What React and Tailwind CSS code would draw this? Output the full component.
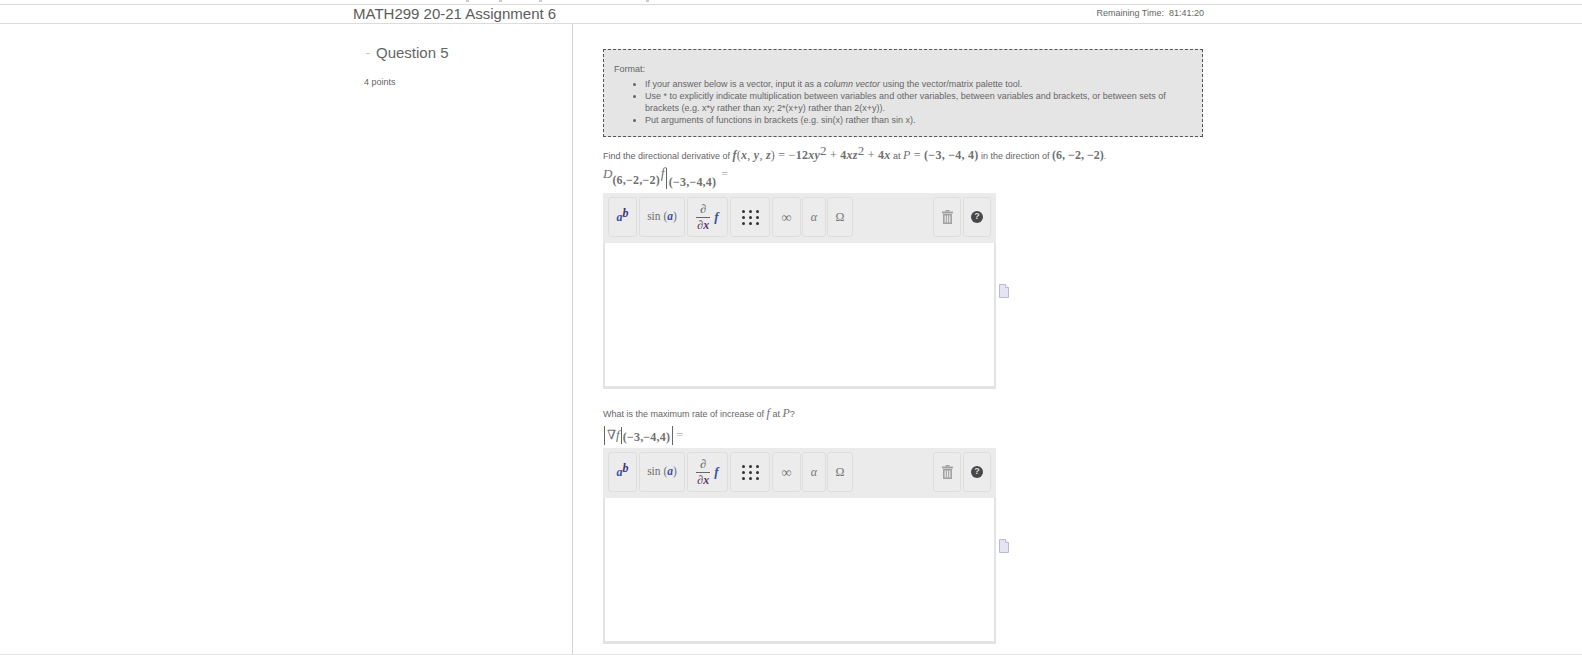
const sans = "font-['Liberation_Sans',Arial,sans-serif]"
const serif = "font-['Liberation_Serif','DejaVu_Serif',serif]"

function M({ children, className = "" }) {
  return <span className={`${serif} text-[#707070] ${className}`}>{children}</span>
}

function V({ children }) {
  return <i className="font-bold">{children}</i>
}

function ToolButton({ className = "", children }) {
  return (
    <div className={`flex h-[40px] shrink-0 items-center justify-center rounded-[3px] border border-[#dedede] bg-[#ececec] ${className}`}>
      {children}
    </div>
  )
}

function Toolbar() {
  return (
    <div className="flex h-[50px] items-center bg-[#ebebeb] pb-[2px] pl-[5px] pr-[5px]">
      <ToolButton className="w-[29px]">
        <span className={`${serif} text-[12px] font-bold italic text-[#3a50a8]`}>
          a<span className="relative -top-[4px] text-[12px] text-[#44357f]">b</span>
        </span>
      </ToolButton>
      <ToolButton className="ml-[2px] w-[46px]">
        <span className={`${serif} text-[11.5px] text-[#707070]`}>
          sin (<b className="italic text-[#3a50a8]">a</b>)
        </span>
      </ToolButton>
      <ToolButton className="ml-[2px] w-[41px]">
        <span className={`${serif} flex items-center gap-[4px] text-[#5c5c5c]`}>
          <span className="flex flex-col items-center text-[12px] font-bold leading-[15px]">
            <i>∂</i>
            <span className="border-t border-[#666] px-[1px] text-[#5a3a6a]"><i>∂x</i></span>
          </span>
          <b className="text-[13px] italic text-[#3a50a8]">f</b>
        </span>
      </ToolButton>
      <ToolButton className="ml-[2px] w-[40px]">
        <div className="grid grid-cols-3 gap-x-[4px] gap-y-[3px]">
          {Array.from({ length: 9 }).map((_, i) => (
            <span key={i} className="h-[3px] w-[3px] rounded-full bg-[#333]" />
          ))}
        </div>
      </ToolButton>
      <ToolButton className="ml-[2px] w-[29px]">
        <span className={`${serif} text-[14px] text-[#777]`}>∞</span>
      </ToolButton>
      <ToolButton className="ml-[1px] w-[24px]">
        <span className={`${serif} text-[12px] italic text-[#777]`}>α</span>
      </ToolButton>
      <ToolButton className="ml-[1px] w-[26px]">
        <span className={`${serif} text-[12px] text-[#777]`}>Ω</span>
      </ToolButton>
      <ToolButton className="ml-auto w-[28px]">
        <svg width="11" height="14" viewBox="0 0 11 14" fill="#a2a2a2">
          <rect x="3.5" y="0" width="4" height="1.5" />
          <rect x="0" y="1.5" width="11" height="2" />
          <path d="M1 4h9v10H1z M2.6 5.5v7h1.2v-7z M4.9 5.5v7h1.2v-7z M7.2 5.5v7h1.2v-7z" fillRule="evenodd" />
        </svg>
      </ToolButton>
      <ToolButton className="ml-[2px] w-[28px]">
        <span className={`flex h-[12px] w-[12px] items-center justify-center rounded-full bg-[#484848] ${sans} text-[9px] font-bold text-[#ddd]`}>?</span>
      </ToolButton>
    </div>
  )
}

function Editor() {
  return (
    <div className="flex items-center">
      <div className="w-[393px] shrink-0">
        <Toolbar />
        <div className="h-[146px] border-[2px] border-t-0 border-b-[3px] border-[#e3e3e3] bg-white" />
      </div>
      <svg className="ml-[3px]" width="10" height="14" viewBox="0 0 10 14">
        <path d="M.5.5h6l3 3v10H.5z" fill="#e4e4f2" stroke="#bcbccc" />
        <path d="M6.5.5v3h3" fill="#fff" stroke="#bcbccc" />
      </svg>
    </div>
  )
}

export default function App() {
  return (
    <div className={`${sans} flex h-[655px] w-[1582px] flex-col overflow-hidden bg-white text-[#666]`}>
      <div className="flex h-[4px] shrink-0 items-start pl-[466px]">
        <span className="h-[2px] w-[3px] bg-[#ccc]" />
        <span className="ml-[30px] h-[2px] w-[3px] bg-[#ccc]" />
        <span className="ml-[37px] h-[2px] w-[3px] bg-[#ccc]" />
        <span className="ml-[104px] h-[2px] w-[3px] bg-[#ccc]" />
      </div>
      <header className="h-[20px] shrink-0 border-y border-[#dcdcdc]">
        <div className="ml-[353px] flex h-full w-[851px] items-center justify-between">
          <h1 className="text-[15px] font-normal text-[#5c5c5c]">MATH299 20-21 Assignment 6</h1>
          <div className="whitespace-pre text-[9px] text-[#666]">Remaining Time:  81:41:20</div>
        </div>
      </header>

      <main className="min-h-0 flex-1 border-b border-[#e3e3e3]">
        <div className="ml-[353px] flex h-full w-[851px]">
          <aside className="w-[220px] shrink-0 border-r border-[#d6d6d6] pt-[20px]">
            <div className="flex items-center pl-[13px] text-[15px] leading-[18px] text-[#666]">
              <span className="mr-[6px] h-px w-[4px] bg-[#ccc]" />
              Question 5
            </div>
            <p className="mt-[14px] pl-[11px] text-[9px] leading-[12px] text-[#666]">4 points</p>
          </aside>

          <section className="min-w-0 flex-1 pl-[30px] pt-[25px]">
            <div className="h-[88px] w-[600px] border border-dashed border-[#555] bg-[#e5e5e5] px-[10px] pt-[13px] text-[9px] leading-[12px] text-[#666]">
              <p>Format:</p>
              <ul className="mt-[3px] list-disc pl-[31px]">
                <li>If your answer below is a vector, input it as a <i>column vector</i> using the vector/matrix palette tool.</li>
                <li>Use * to explicitly indicate multiplication between variables and other variables, between variables and brackets, or between sets of brackets (e.g. x*y rather than xy; 2*(x+y) rather than 2(x+y)).</li>
                <li>Put arguments of functions in brackets (e.g. sin(x) rather than sin x).</li>
              </ul>
            </div>

            <p className="mt-[9px] h-[18px] whitespace-pre text-[9px] leading-[18px] text-[#666]">
              Find the directional derivative of{" "}
              <M className="text-[12px] tracking-[0.25px]">
                <V>f</V>(<V>x</V>, <V>y</V>, <V>z</V>) = −<b>12</b><V>x</V><V>y</V><span className="relative -top-[4px] text-[13px]">2</span> + <b>4</b><V>x</V><V>z</V><span className="relative -top-[4px] text-[13px]">2</span> + <b>4</b><V>x</V>
              </M>{" "}at{" "}
              <M className="text-[12px] tracking-[0.25px]"><i>P</i> = <b>(−3, −4, 4)</b></M>{" "}in the direction of{" "}
              <M className="text-[12px]"><b>(6, −2, −2)</b></M>.
            </p>
            <div className="mt-[2px] flex h-[24px] items-start">
              <M className="mt-[1px] text-[13px] leading-[14px]"><i>D</i></M>
              <M className="mt-[7px] text-[12px] font-bold leading-[14px] tracking-[0.2px]">(6,−2,−2)</M>
              <M className="text-[14px] leading-[16px]"><i className="ml-[1px]">f</i></M>
              <span className="ml-px mt-[2px] flex h-[21px] items-end border-l border-[#666] pl-[2px]">
                <M className="text-[12px] font-bold leading-[14px] tracking-[0.2px]">(−3,−4,4)</M>
              </span>
              <M className="ml-[5px] mt-[1px] text-[12px] leading-[14px] text-[#aaa]">=</M>
            </div>

            <div className="mt-[3px]"><Editor /></div>

            <p className="mt-[17px] h-[14px] whitespace-pre text-[9px] leading-[14px] text-[#666]">
              What is the maximum rate of increase of <M className="text-[12px]"><i>f</i></M> at <M className="text-[12px]"><i>P</i></M>?
            </p>
            <div className="mt-[3px] flex h-[24px] items-center">
              <span className="ml-px flex h-[19px] items-center border-x border-[#666] px-[2px]">
                <M className="text-[13px]">∇<i>f</i></M>
                <span className="ml-[1px] flex h-[17px] items-end border-l border-[#666] pl-[1px]">
                  <M className="text-[12px] font-bold leading-[14px] tracking-[0.2px]">(−3,−4,4)</M>
                </span>
              </span>
              <M className="ml-[3px] text-[12px] text-[#aaa]">=</M>
            </div>

            <div className="mt-[1px]"><Editor /></div>
          </section>
        </div>
      </main>
    </div>
  )
}
